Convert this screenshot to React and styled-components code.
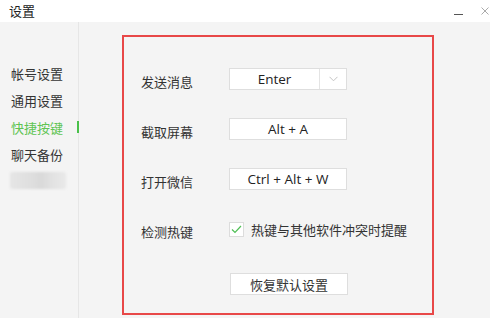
import React from 'react'
import styled, { createGlobalStyle } from 'styled-components'

const GlobalStyle = createGlobalStyle`
  html, body {
    margin: 0;
    padding: 0;
    background: #f4f4f4;
  }
  body {
    font-family: "Noto Sans CJK SC", "Noto Sans", sans-serif;
    font-size: 13px;
    color: #333;
  }
`

const Window = styled.div`
  width: 490px;
  height: 318px;
  display: flex;
  flex-direction: column;
  overflow: hidden;
  background: #f4f4f4;
`

const TitleBar = styled.div`
  height: 22px;
  background: #fff;
  display: flex;
  align-items: center;
  padding-left: 9px;
  font-size: 13px;
  color: #222;
`

const Title = styled.span`
  flex: 1;
  line-height: 20px;
`

const WinButton = styled.span`
  width: ${(p) => p.w}px;
  margin-right: ${(p) => p.gap || 0}px;
  display: flex;
  justify-content: center;
  align-items: center;
`

const Body = styled.div`
  flex: 1;
  display: flex;
`

const Sidebar = styled.div`
  width: 79px;
  border-right: 1px solid #e6e6e6;
  padding-top: 38px;
  box-sizing: border-box;
`

const NavItem = styled.div`
  position: relative;
  padding-left: 11px;
  line-height: 27px;
  height: 27px;
  color: ${(p) => (p.active ? '#5fc453' : '#333')};

  &::after {
    content: '';
    display: ${(p) => (p.active ? 'block' : 'none')};
    position: absolute;
    right: -1px;
    top: 7px;
    width: 2px;
    height: 12px;
    background: #49c04a;
  }
`

const Blurred = styled.div`
  margin: 4px 0 0 10px;
  width: 56px;
  height: 17px;
  border-radius: 2px;
  background: linear-gradient(90deg, #e6e6e6 0%, #dedede 40%, #d9d9d9 55%, #e2e2e2 75%, #e9e9e9 100%);
  filter: blur(1px);
`

const Main = styled.div`
  flex: 1;
  padding: 13px 0 0 43px;
`

const Frame = styled.div`
  width: 312px;
  height: 280px;
  box-sizing: border-box;
  border: 2px solid #e84848;
  padding: 31px 0 0 17px;
  display: flex;
  flex-direction: column;
`

const Row = styled.div`
  display: flex;
  align-items: center;
  height: 22px;
  margin-bottom: 28px;
`

const Label = styled.div`
  width: 88px;
  padding-top: 5px;
`

const KeyBox = styled.div`
  width: 118px;
  height: 22px;
  box-sizing: border-box;
  background: #fff;
  border: 1px solid #dedede;
  display: flex;
  align-items: center;
  font-family: "Open Sans", "Noto Sans", sans-serif;
  font-size: 13.5px;
  color: #222;
`

const KeyText = styled.span`
  flex: 1;
  text-align: center;
`

const Drop = styled.span`
  width: 26px;
  height: 100%;
  border-left: 1px solid #e4e4e4;
  display: flex;
  align-items: center;
  justify-content: center;
`

const Check = styled.span`
  width: 15px;
  height: 15px;
  box-sizing: border-box;
  background: #fff;
  border: 1px solid #dcdcdc;
  display: flex;
  align-items: center;
  justify-content: center;
  margin-right: 7px;
`

const Button = styled.button`
  margin: 5px 0 0 89px;
  width: 118px;
  height: 22px;
  box-sizing: border-box;
  background: #fff;
  border: 1px solid #dedede;
  font-family: "Noto Sans CJK SC", sans-serif;
  font-size: 13px;
  color: #333;
  padding: 0;
`

const shortcuts = [
  { label: '截取屏幕', keys: 'Alt + A' },
  { label: '打开微信', keys: 'Ctrl + Alt + W' },
]

export default function App() {
  return (
    <Window>
      <GlobalStyle />
      <TitleBar>
        <Title>设置</Title>
        <WinButton w={16} gap={14}>
          <svg width="9" height="9" viewBox="0 0 9 9">
            <path d="M0 7.5h9" stroke="#555" strokeWidth="1" />
          </svg>
        </WinButton>
        <WinButton w={10}>
          <svg width="8" height="8" viewBox="0 0 8 8">
            <path d="M0.5 0.5l7 7M7.5 0.5l-7 7" stroke="#aaa" strokeWidth="1" />
          </svg>
        </WinButton>
      </TitleBar>
      <Body>
        <Sidebar>
          <NavItem>帐号设置</NavItem>
          <NavItem>通用设置</NavItem>
          <NavItem active>快捷按键</NavItem>
          <NavItem>聊天备份</NavItem>
          <Blurred />
        </Sidebar>
        <Main>
          <Frame>
            <Row>
              <Label>发送消息</Label>
              <KeyBox>
                <KeyText>Enter</KeyText>
                <Drop>
                  <svg width="9" height="6" viewBox="0 0 9 6">
                    <path d="M0.5 0.8l4 4 4-4" fill="none" stroke="#c4c4c4" strokeWidth="1" />
                  </svg>
                </Drop>
              </KeyBox>
            </Row>
            {shortcuts.map((s) => (
              <Row key={s.label}>
                <Label>{s.label}</Label>
                <KeyBox>
                  <KeyText>{s.keys}</KeyText>
                </KeyBox>
              </Row>
            ))}
            <Row>
              <Label>检测热键</Label>
              <Check>
                <svg width="11" height="9" viewBox="0 0 11 9">
                  <path d="M1 4.5l3 3 6-6.5" fill="none" stroke="#4fbf55" strokeWidth="1.2" />
                </svg>
              </Check>
              <span>热键与其他软件冲突时提醒</span>
            </Row>
            <Button>恢复默认设置</Button>
          </Frame>
        </Main>
      </Body>
    </Window>
  )
}
